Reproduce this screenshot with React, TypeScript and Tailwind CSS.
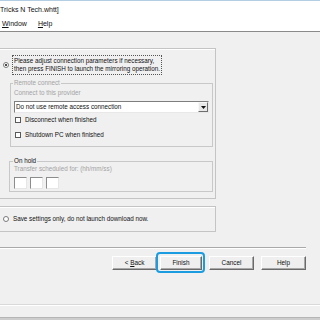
import React from "react";

const Radio = ({ checked }: { checked?: boolean }) => (
  <div className="w-[6px] h-[6px] rounded-full border border-[#7a7a7a] bg-white flex items-center justify-center shrink-0">
    {checked && <div className="w-[2px] h-[2px] rounded-full bg-[#111]" />}
  </div>
);

const Check = () => (
  <div className="w-[6px] h-[6px] border border-[#5a5a5a] bg-white shrink-0" />
);

const TimeBox = () => (
  <div className="w-[13px] h-[12px] bg-white border border-t-[#8c8c8c] border-l-[#8c8c8c] border-b-[#e6e6e6] border-r-[#e6e6e6]" />
);

const Btn = ({ children, cls }: { children: React.ReactNode; cls: string }) => (
  <div
    className={`h-[14px] bg-[#efefef] border border-t-white border-l-white border-b-[#6a6a6a] border-r-[#6a6a6a] shadow-[inset_-1px_-1px_0_#a8a8a8] flex items-center justify-center text-[6.4px] leading-[8px] text-[#111] ${cls}`}
  >
    {children}
  </div>
);

export default function App() {
  return (
    <div className="w-[320px] h-[320px] overflow-hidden bg-[#f0f0f0] font-['Liberation_Sans',Arial,sans-serif] text-[#111] whitespace-nowrap">
      {/* title + menu */}
      <div className="h-[1px] bg-[#b3cde2]" />
      <div className="h-[16px] bg-white flex items-center text-[7px] leading-[8px] pt-[1px]">
        <span>Tricks N Tech.whtt]</span>
      </div>
      <div className="h-[14px] bg-white flex items-center text-[7px] leading-[8px] pl-[2px]">
        <span>
          <span className="underline">W</span>indow
        </span>
        <span className="ml-[11px]">
          <span className="underline">H</span>elp
        </span>
      </div>
      <div className="h-[1px] bg-[#8a8a8a]" />

      <div className="pt-[16px]">
        {/* outer panel */}
        <div className="ml-[-2px] w-[218px] h-[151px] border border-[#c4c4c4] shadow-[inset_1px_1px_0_#fff] flex flex-col text-[6.3px] leading-[8px]">
          <div className="mt-[6px] ml-[4px] flex items-center">
            <Radio checked />
            <div className="ml-[3px] border border-dotted border-[#555] px-[1px] py-[1px]">
              <div>Please adjust connection parameters if necessary,</div>
              <div>then press FINISH to launch the mirroring operation.</div>
            </div>
          </div>

          <fieldset className="mt-[4px] ml-[11px] w-[203px] border border-[#c8c8c8] pl-[2px] pr-[3px] pb-[7px]">
            <legend className="px-[1px] text-[#a3a3a3]">Remote connect</legend>
            <div className="mt-[2px] ml-[1px] text-[#a3a3a3]">Connect to this provider</div>
            <div className="mt-[4px] ml-[1px] w-[195px] h-[12px] bg-white border border-t-[#7e7e7e] border-l-[#7e7e7e] border-b-[#e8e8e8] border-r-[#e8e8e8] flex items-center">
              <span className="ml-[1px] flex-1">Do not use remote access connection</span>
              <div className="w-[10px] h-[10px] bg-[#e9e9e9] border border-t-[#f8f8f8] border-l-[#f8f8f8] border-b-[#6e6e6e] border-r-[#6e6e6e] flex items-center justify-center">
                <svg width="5" height="3" viewBox="0 0 5 3">
                  <path d="M0 0H5L2.5 3Z" fill="#111" />
                </svg>
              </div>
            </div>
            <div className="mt-[3px] ml-[2px] flex items-center h-[8px]">
              <Check />
              <span className="ml-[4px]">Disconnect when finished</span>
            </div>
            <div className="mt-[7px] ml-[2px] flex items-center h-[8px]">
              <Check />
              <span className="ml-[4px]">Shutdown PC when finished</span>
            </div>
          </fieldset>

          <fieldset className="mt-[10px] ml-[10px] w-[204px] border border-[#c8c8c8] pl-[3px] pr-[3px] pb-[2px]">
            <legend className="px-[1px] text-[#111]">On hold</legend>
            <div className="ml-[1px] text-[#a3a3a3]">Transfer scheduled for: (hh/mm/ss)</div>
            <div className="mt-[4px] ml-[1px] flex gap-[3px]">
              <TimeBox />
              <TimeBox />
              <TimeBox />
            </div>
          </fieldset>
        </div>

        {/* save settings */}
        <div className="mt-[7px] ml-[-2px] w-[218px] h-[26px] border border-[#c4c4c4] shadow-[inset_1px_1px_0_#fff] flex items-center text-[6.3px] leading-[8px]">
          <div className="ml-[4px]">
            <Radio />
          </div>
          <span className="ml-[4px]">Save settings only, do not launch download now.</span>
        </div>

        {/* separator */}
        <div className="mt-[15px] w-[306px] h-[1px] bg-[#a9a9a9]" />
        <div className="w-[306px] h-[1px] bg-white" />

        {/* buttons */}
        <div className="mt-[7px] flex">
          <Btn cls="ml-[112px] w-[45px]">
            <span>
              &lt; <span className="underline">B</span>ack
            </span>
          </Btn>
          <div className="relative ml-[3px]">
            <Btn cls="w-[42px]">Finish</Btn>
            <div className="absolute left-[-4px] top-[-4px] w-[49px] h-[21px] rounded-[4px] border-[2.5px] border-[#1c9ce0]" />
          </div>
          <Btn cls="ml-[7px] w-[45px]">Cancel</Btn>
          <Btn cls="ml-[7px] w-[45px]">Help</Btn>
        </div>

        {/* bottom edges */}
        <div className="mt-[34px] h-[1px] bg-[#d9d9d9]" />
        <div className="h-[1px] bg-white" />
        <div className="mt-[11px] h-[1px] bg-[#b5b5b5]" />
        <div className="h-[3px] bg-[#cdcdcd]" />
      </div>
    </div>
  );
}
